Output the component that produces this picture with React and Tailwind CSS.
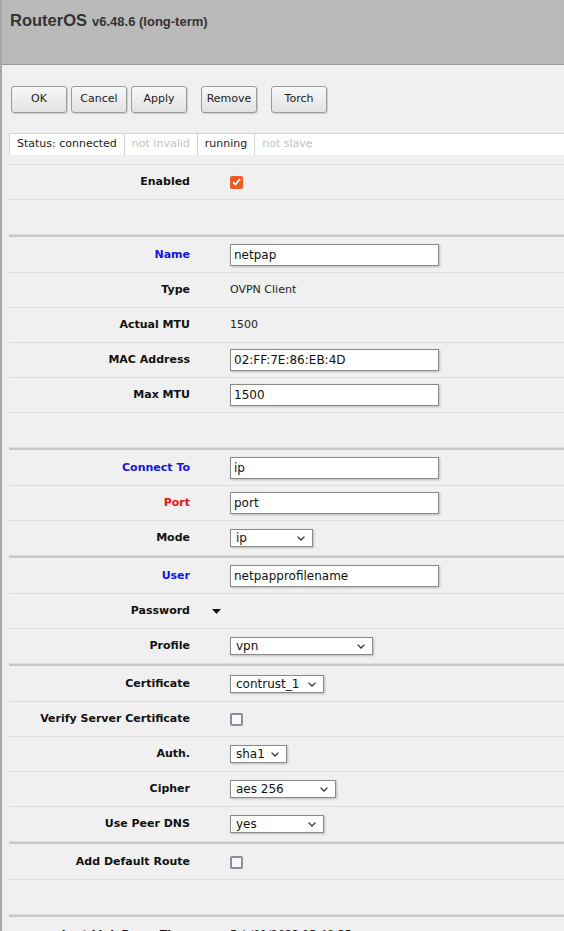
import React from 'react';

const sans = "font-['DejaVu_Sans',sans-serif]";

const sections = [
  [
    { label: 'Enabled', kind: 'check', checked: true },
    { kind: 'blank' },
  ],
  [
    { label: 'Name', tone: 'blue', kind: 'input', value: 'netpap' },
    { label: 'Type', kind: 'text', value: 'OVPN Client' },
    { label: 'Actual MTU', kind: 'text', value: '1500' },
    { label: 'MAC Address', kind: 'input', value: '02:FF:7E:86:EB:4D' },
    { label: 'Max MTU', kind: 'input', value: '1500' },
    { kind: 'blank' },
  ],
  [
    { label: 'Connect To', tone: 'blue', kind: 'input', value: 'ip' },
    { label: 'Port', tone: 'red', kind: 'input', value: 'port' },
    { label: 'Mode', kind: 'select', value: 'ip', width: 'w-[83px]' },
  ],
  [
    { label: 'User', tone: 'blue', kind: 'input', value: 'netpapprofilename' },
    { label: 'Password', kind: 'toggle' },
    { label: 'Profile', kind: 'select', value: 'vpn', width: 'w-[143px]' },
  ],
  [
    { label: 'Certificate', kind: 'select', value: 'contrust_1', width: 'w-[94px]' },
    { label: 'Verify Server Certificate', kind: 'check', checked: false },
    { label: 'Auth.', kind: 'select', value: 'sha1', width: 'w-[57px]' },
    { label: 'Cipher', kind: 'select', value: 'aes 256', width: 'w-[106px]' },
    { label: 'Use Peer DNS', kind: 'select', value: 'yes', width: 'w-[94px]' },
  ],
  [
    { label: 'Add Default Route', kind: 'check', checked: false },
    { kind: 'blank' },
  ],
  [
    { label: 'Last Link Down Time', kind: 'text', value: 'Feb/01/2023 15:48:35' },
    { label: 'Last Link Up Time', kind: 'text', value: 'Feb/01/2023 15:48:40' },
  ],
];

const labelTone = {
  blue: 'text-[#1414e6]',
  red: 'text-[#ee1111]',
};

function Chevron() {
  return (
    <svg width="8" height="5" viewBox="0 0 8 5" className="shrink-0">
      <path d="M0.6 0.6 L4 4 L7.4 0.6" fill="none" stroke="#333" strokeWidth="1.3" />
    </svg>
  );
}

function Checkbox({ checked }) {
  if (checked) {
    return (
      <span className="flex h-[13px] w-[13px] items-center justify-center rounded-[2px] bg-[#f05a24]">
        <svg width="9" height="8" viewBox="0 0 9 8">
          <path d="M1 4.2 L3.4 6.5 L8 1.2" fill="none" stroke="#fff" strokeWidth="1.8" />
        </svg>
      </span>
    );
  }
  return <span className="block h-[13px] w-[13px] rounded-[2px] border-2 border-[#8c8c9a] bg-[#f8f8f8]" />;
}

function Field({ row }) {
  switch (row.kind) {
    case 'input':
      return (
        <input
          readOnly
          value={row.value}
          className={`h-[22px] w-[209px] border border-[#8a8a8a] bg-white pl-[3px] text-[12px] text-[#111] shadow-[1px_1px_2px_rgba(0,0,0,0.22)] outline-none ${sans}`}
        />
      );
    case 'select':
      return (
        <div
          className={`flex h-[18px] items-center justify-between border border-[#8a8a8a] bg-white pl-[5px] pr-[7px] text-[12px] text-[#111] shadow-[1px_1px_2px_rgba(0,0,0,0.22)] ${row.width}`}
        >
          <span>{row.value}</span>
          <Chevron />
        </div>
      );
    case 'check':
      return <Checkbox checked={row.checked} />;
    case 'text':
      return <span className="text-[11px] text-[#222]">{row.value}</span>;
    default:
      return null;
  }
}

function FormRow({ row }) {
  return (
    <div className="flex h-[35px] items-center border-b border-[#dcdcdc]">
      <div
        className={`w-[181px] shrink-0 text-right text-[11px] font-bold ${labelTone[row.tone] || 'text-[#111]'}`}
      >
        {row.label}
      </div>
      <div className="w-[40px] shrink-0 pl-[22px]">
        {row.kind === 'toggle' && (
          <svg width="9" height="5" viewBox="0 0 9 5" className="block">
            <path d="M0 0 H9 L4.5 5 Z" fill="#111" />
          </svg>
        )}
      </div>
      <div className="flex items-center">
        <Field row={row} />
      </div>
    </div>
  );
}

function ToolButton({ children, className = '' }) {
  return (
    <button
      className={`h-[27px] w-[56px] rounded-[3px] border border-[#9b9b9b] bg-linear-to-b from-[#f8f8f8] to-[#e2e2e2] text-[11px] text-[#222] shadow-[1px_1px_1px_rgba(0,0,0,0.15)] ${className}`}
    >
      {children}
    </button>
  );
}

const statusItems = [
  { text: 'Status: connected', on: true },
  { text: 'not invalid', on: false },
  { text: 'running', on: true },
  { text: 'not slave', on: false },
];

export default function App() {
  return (
    <div className={`min-h-screen border-l-2 border-[#a8a8a8] bg-[#f0f0f0] ${sans}`}>
      <header className="h-[65px] border-b border-[#9a9a9a] bg-[#bababa] pl-[8px] pt-[8px]">
        <div className="flex items-baseline gap-[5px] font-['Liberation_Sans',sans-serif] font-bold text-[#333]">
          <span className="text-[16.5px]">RouterOS</span>
          <span className="text-[13px]">v6.48.6 (long-term)</span>
        </div>
      </header>

      <div className="mt-[21px] flex pl-[9px]">
        <div className="flex gap-[4px]">
          <ToolButton>OK</ToolButton>
          <ToolButton>Cancel</ToolButton>
          <ToolButton>Apply</ToolButton>
        </div>
        <ToolButton className="ml-[14px]">Remove</ToolButton>
        <ToolButton className="ml-[14px]">Torch</ToolButton>
      </div>

      <div className="ml-[7px] mt-[20px] flex h-[22px] border-l border-t border-[#d2d2d2] bg-white text-[11px]">
        {statusItems.map((item, i) => (
          <div
            key={item.text}
            className={`flex items-center px-[7px] ${i === statusItems.length - 1 ? 'flex-1' : 'border-r border-[#d2d2d2]'} ${item.on ? 'text-[#222]' : 'text-[#c2c2c2]'}`}
          >
            {item.text}
          </div>
        ))}
      </div>

      <div className="ml-[7px] mt-[9px] border-t border-[#dcdcdc]">
        {sections.map((rows, s) => (
          <div key={s}>
            {s > 0 && <div className="h-[3px] border-t-2 border-[#c8c8c8]" />}
            {rows.map((row, r) => (
              <FormRow key={r} row={row} />
            ))}
          </div>
        ))}
      </div>
    </div>
  );
}
